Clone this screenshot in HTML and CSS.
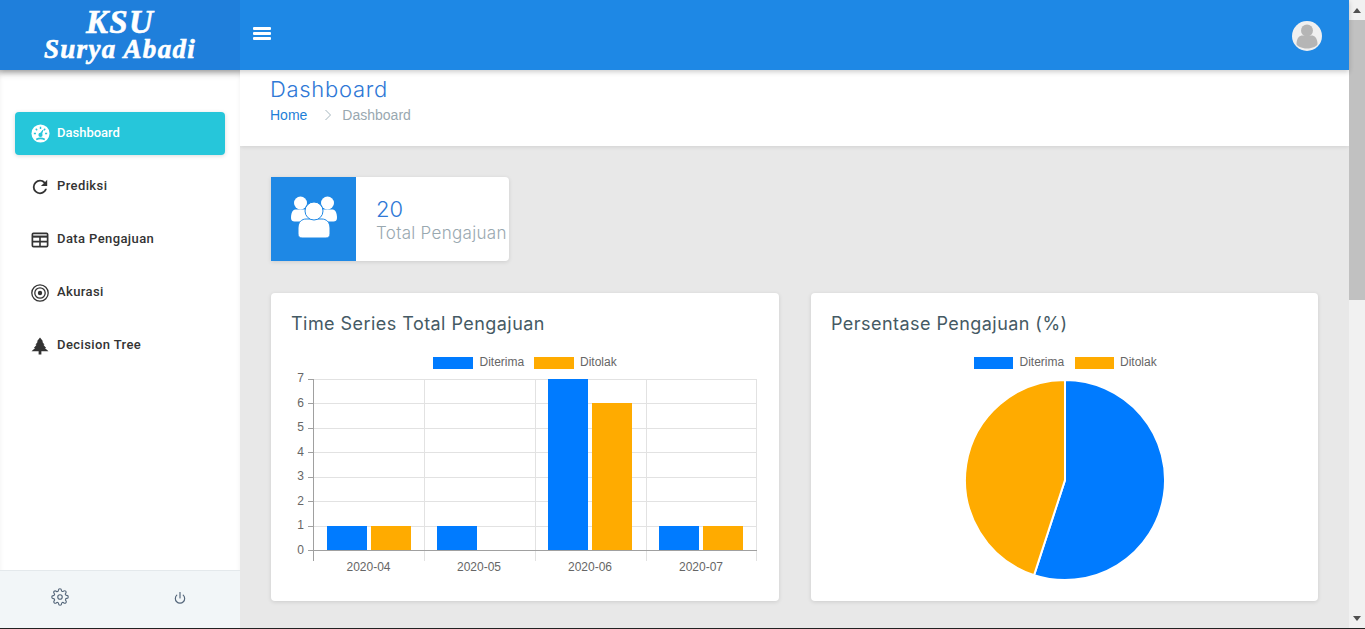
FILE: index.html
```html
<!DOCTYPE html>
<html>
<head>
	<meta charset="utf-8">
	<title>Dashboard</title>
	<link rel="stylesheet" href="styles.css">
</head>
<body>
<div class="window">
	<div class="shell">
		<header class="topbar">
			<div class="logo">KSU<br>Surya Abadi</div>
			<div class="topbar-right">
				<div class="burger"><span></span><span></span><span></span></div>
				<svg class="avatar" viewBox="0 0 30 30">
					<circle cx="15" cy="15" r="15" fill="#f0f0f0"/>
					<circle cx="15" cy="9.500" r="6" fill="#b5b5b5"/>
					<path d="M4.500 23c0-6 3-8.500 6-8.500h9c3 0 6 2.500 6 8.500 0 2-5 4.500-10.500 4.500S4.500 25 4.500 23z" fill="#b5b5b5"/>
				</svg>
			</div>
		</header>

		<div class="content">
			<aside class="sidebar">
				<nav class="menu">
					<a class="menu-item active">
						<svg class="menu-icon big" viewBox="0 0 20 20">
							<circle cx="10" cy="10" r="9.500" fill="#fff"/>
							<path d="M10 3v2.200M5 5l1.500 1.500M15 5l-1.500 1.500M3 10h2.200M17 10h-2.200" stroke="#26c6da" stroke-width="1.500"/>
							<path d="M9.500 10.500 12.500 6.500 10.800 11.500Z" fill="#26c6da" stroke="#26c6da"/>
							<circle cx="10" cy="11.500" r="2.200" fill="#26c6da"/>
							<path d="M5.500 16.200c2.500-1.300 6.500-1.300 9 0" fill="none" stroke="#26c6da" stroke-width="1.800"/>
						</svg>
						<span class="menu-label">Dashboard</span>
					</a>
					<a class="menu-item">
						<svg class="menu-icon" viewBox="2 2 20 20">
							<path fill="#333" d="M17.650 6.350C16.200 4.900 14.210 4 12 4A8 8 0 0 0 4 12 8 8 0 0 0 12 20C15.730 20 18.840 17.450 19.730 14H17.650C16.830 16.330 14.610 18 12 18A6 6 0 0 1 6 12 6 6 0 0 1 12 6C13.660 6 15.140 6.690 16.220 7.780L13 11H20V4L17.650 6.350Z"/>
						</svg>
						<span class="menu-label">Prediksi</span>
					</a>
					<a class="menu-item">
						<svg class="menu-icon" viewBox="-.5 -1.500 17 17">
							<rect x="0.800" y="0.800" width="14.400" height="12.400" rx="1" fill="none" stroke="#333" stroke-width="1.600"/>
							<path d="M1 3.800h14" stroke="#333" stroke-width="2"/>
							<path d="M1 8.500h14M8 4v9" stroke="#333" stroke-width="1.500"/>
						</svg>
						<span class="menu-label">Data Pengajuan</span>
					</a>
					<a class="menu-item">
						<svg class="menu-icon" viewBox="0 0 18 18">
							<circle cx="9" cy="9" r="8.200" fill="none" stroke="#333" stroke-width="1.300"/>
							<circle cx="9" cy="9" r="5.200" fill="none" stroke="#333" stroke-width="1.300"/>
							<circle cx="9" cy="9" r="2.200" fill="#333"/>
						</svg>
						<span class="menu-label">Akurasi</span>
					</a>
					<a class="menu-item">
						<svg class="menu-icon" viewBox="-.5 -.5 17 17">
							<path fill="#333" d="M8 0 11 3.800H10L12.300 6.800H11.200L13.800 9.800H12.600L16 13H9.300V16H6.700V13H0L3.400 9.800H2.200L4.800 6.800H3.700L6 3.800H5Z"/>
						</svg>
						<span class="menu-label">Decision Tree</span>
					</a>
				</nav>
				<div class="side-foot">
					<svg class="foot-icon" viewBox="0 0 24 24" fill="none" stroke="#54667a" stroke-width="1.500" stroke-linejoin="round">
						<circle cx="12" cy="12" r="3"/>
						<path d="M19.400 15a1.650 1.650 0 0 0 .33 1.820l.06.06a2 2 0 1 1-2.830 2.830l-.06-.06a1.650 1.650 0 0 0-2.800 1.150V21a2 2 0 1 1-4 0v-.09a1.650 1.650 0 0 0-2.900-1.150l-.06.06a2 2 0 1 1-2.830-2.830l.06-.06a1.650 1.650 0 0 0-1.150-2.800H3a2 2 0 1 1 0-4h.09a1.650 1.650 0 0 0 1.150-2.900l-.06-.06a2 2 0 1 1 2.830-2.830l.06.06a1.650 1.650 0 0 0 2.800-1.150V3a2 2 0 1 1 4 0v.09a1.650 1.650 0 0 0 2.800 1.150l.06-.06a2 2 0 1 1 2.830 2.830l-.06.06a1.650 1.650 0 0 0 1.150 2.800H21a2 2 0 1 1 0 4h-.09a1.650 1.650 0 0 0-1.510 1.130z"/>
					</svg>
					<svg class="foot-icon power" viewBox="0 0 24 24" fill="none" stroke="#54667a" stroke-width="2" stroke-linecap="round">
						<path d="M6.500 7a8 8 0 1 0 11 0"/>
						<path d="M12 2.500v9.500"/>
					</svg>
				</div>
			</aside>

			<main class="main">
				<div class="page-head">
					<h1 class="page-title">Dashboard</h1>
					<div class="crumbs">
						<a class="crumb-link">Home</a>
						<svg class="crumb-sep" viewBox="0 0 8 12"><path d="M1.500 1l5 5-5 5" fill="none" stroke="#a6b7bf" stroke-width="1"/></svg>
						<span class="crumb-now">Dashboard</span>
					</div>
				</div>

				<div class="page-body">
					<div class="stat-card">
						<div class="stat-icon">
							<svg viewBox="0 0 46 42" width="46" height="42">
								<circle cx="9.500" cy="7" r="6.500" fill="#fff"/>
								<circle cx="36.500" cy="7" r="6.500" fill="#fff"/>
								<path d="M0 22c0-6 2-8.500 5-8.500h36c3 0 5 2.500 5 8.500 0 2.500-1.500 3.500-3.500 3.500h-39C1.500 25.500 0 24.500 0 22z" fill="#fff"/>
								<path d="M7 32c0-6 4-9 8-9h16c4 0 8 3 8 9v6c0 2.500-1.500 4-4 4H11c-2.500 0-4-1.500-4-4z" fill="#fff" stroke="#1e88e5" stroke-width="1"/>
								<circle cx="23" cy="15" r="9" fill="#fff" stroke="#1e88e5" stroke-width="1"/>
							</svg>
						</div>
						<div class="stat-text">
							<div class="stat-num">20</div>
							<div class="stat-label">Total Pengajuan</div>
						</div>
					</div>

					<div class="chart-row">
						<section class="card">
							<h2 class="card-title">Time Series Total Pengajuan</h2>
							<svg class="chart" viewBox="0 0 508 244" width="508" height="244">
								<g class="grid">
									<path d="M42 86.500h444M42 110.500h444M42 135.500h444M42 159.500h444M42 184.500h444M42 208.500h444M42 233.500h444"/>
									<path d="M153.500 86v182M264.500 86v182M375.500 86v182M485.500 86v182"/>
								</g>
								<g class="axis">
									<path d="M42.500 86v182M37 257.500h449"/>
								</g>
								<g class="ticks">
									<path d="M37 86.500h5M37 110.500h5M37 135.500h5M37 159.500h5M37 184.500h5M37 208.500h5M37 233.500h5"/>
								</g>
								<rect class="blue" x="162" y="64" width="40" height="12"/>
								<text x="208.500" y="73">Diterima</text>
								<rect class="orange" x="263" y="64" width="40" height="12"/>
								<text x="309" y="73">Ditolak</text>

								<rect class="blue" x="56" y="233" width="40" height="24"/>
								<rect class="orange" x="100" y="233" width="40" height="24"/>
								<rect class="blue" x="166" y="233" width="40" height="24"/>
								<rect class="blue" x="277" y="86" width="40" height="171"/>
								<rect class="orange" x="321" y="110" width="40" height="147"/>
								<rect class="blue" x="388" y="233" width="40" height="24"/>
								<rect class="orange" x="432" y="233" width="40" height="24"/>

								<g class="y-labels">
									<text x="33" y="89">7</text>
									<text x="33" y="114">6</text>
									<text x="33" y="138">5</text>
									<text x="33" y="163">4</text>
									<text x="33" y="187">3</text>
									<text x="33" y="212">2</text>
									<text x="33" y="236">1</text>
									<text x="33" y="261">0</text>
								</g>
								<g class="x-labels">
									<text x="97.500" y="278">2020-04</text>
									<text x="208" y="278">2020-05</text>
									<text x="319" y="278">2020-06</text>
									<text x="430" y="278">2020-07</text>
								</g>
							</svg>
						</section>

						<section class="card">
							<h2 class="card-title">Persentase Pengajuan (%)</h2>
							<svg class="chart" viewBox="0 0 508 244" width="508" height="244">
								<rect class="blue" x="163" y="64" width="39" height="12"/>
								<text x="208.500" y="73">Diterima</text>
								<rect class="orange" x="264" y="64" width="39" height="12"/>
								<text x="309" y="73">Ditolak</text>
								<path class="blue slice" d="M254 87A100 100 0 1 1 223.100 282.100L254 187Z"/>
								<path class="orange slice" d="M223.100 282.100A100 100 0 0 1 254 87V187Z"/>
							</svg>
						</section>
					</div>
				</div>
			</main>
		</div>
	</div>

	<div class="scrollbar">
		<div class="scroll-btn"><span class="arrow-up"></span></div>
		<div class="scroll-thumb"></div>
		<div class="scroll-rest"></div>
		<div class="scroll-btn"><span class="arrow-down"></span></div>
	</div>
</div>
<div class="screen-edge"></div>
</body>
</html>
```

FILE: styles.css
```css
html, body {
	margin: 0;
	height: 100%;
	overflow: hidden;
}

body {
	font-family: "Liberation Sans", Arial, sans-serif;
	background-color: #e8e8e8;
}

.window {
	display: flex;
	height: 628px;
	overflow: hidden;
}

.shell {
	width: 1349px;
	display: flex;
	flex-direction: column;
}

.screen-edge {
	height: 1px;
	background-color: #222;
}

/* barra de cima */
.topbar {
	display: flex;
	height: 70px;
	flex: none;
	position: relative;
	z-index: 2;
	background-color: #1e88e5;
	box-shadow: 0 2px 5px rgba(0, 0, 0, .2);
}

.logo {
	width: 240px;
	flex: none;
	padding-top: 9px;
	box-sizing: border-box;
	background-color: #1f7fdb;
	color: #fff;
	text-align: center;
	font-family: "Liberation Serif", serif;
	font-style: italic;
	font-weight: bold;
	font-size: 27px;
	line-height: 27px;
	letter-spacing: 1.300px;
	-webkit-text-stroke: .6px #fff;
}

.logo::first-line {
	font-size: 33px;
}

.topbar-right {
	flex: 1;
	display: flex;
	align-items: center;
	justify-content: space-between;
	padding: 0 27px 0 13px;
}

.burger {
	width: 18px;
	display: flex;
	flex-direction: column;
	gap: 2px;
	margin-bottom: 4px;
}

.burger span {
	height: 3px;
	background-color: #fff;
	border-radius: 1px;
}

.avatar {
	width: 30px;
	height: 30px;
	margin-top: 2px;
}

.content {
	flex: 1;
	display: flex;
	min-height: 0;
}

/* menu lateral */
.sidebar {
	width: 240px;
	flex: none;
	display: flex;
	flex-direction: column;
	background-color: #fff;
	position: relative;
	z-index: 1;
	box-shadow: inset 0 7px 7px -4px rgba(0, 0, 0, .25);
}

.menu {
	flex: 1;
	padding: 42px 15px 0;
	display: flex;
	flex-direction: column;
	gap: 10px;
}

.menu-item {
	height: 43px;
	display: flex;
	align-items: center;
	gap: 8px;
	padding-left: 16px;
	font-family: Roboto, sans-serif;
	font-size: 13px;
	font-weight: 500;
	letter-spacing: .4px;
	color: #333;
	border-radius: 4px;
}

.menu-label {
	margin-top: -2px;
}

.menu-item.active {
	background-color: #26c6da;
	color: #fff;
	letter-spacing: 0;
	box-shadow: 0 1px 4px rgba(0, 0, 0, .15);
}

.menu-icon {
	width: 18px;
	height: 18px;
	flex: none;
}

.menu-icon.big {
	width: 19px;
	height: 19px;
	margin-right: -1px;
}

.side-foot {
	height: 57px;
	flex: none;
	display: flex;
	background-color: #f2f6f8;
	border-top: 1px solid #e4e9ec;
}

.foot-icon {
	width: 18px;
	height: 18px;
	margin: 17px 0 0 51px;
}

.foot-icon.power {
	width: 14px;
	height: 14px;
	margin: 20px 0 0 104px;
}

/* conteudo */
.main {
	flex: 1;
	min-width: 0;
	background-color: #e8e8e8;
}

.page-head {
	height: 76px;
	box-sizing: border-box;
	padding: 6px 30px 0;
	background-color: #fff;
	box-shadow: 0 1px 4px rgba(0, 0, 0, .1);
}

.page-title {
	margin: 0;
	font-family: Inter, sans-serif;
	font-size: 22px;
	line-height: 26px;
	font-weight: 300;
	letter-spacing: .7px;
	color: #2f78d6;
}

.crumbs {
	display: flex;
	align-items: center;
	margin-top: 5px;
	font-size: 14px;
}

.crumb-link {
	color: #1e7fd8;
}

.crumb-sep {
	width: 8px;
	height: 12px;
	margin: 0 10px 0 17px;
}

.crumb-now {
	color: #99a8b0;
}

.page-body {
	padding: 31px 30px 0;
}

.stat-card {
	width: 238px;
	height: 84px;
	margin-left: 1px;
	display: flex;
	background-color: #fff;
	border-radius: 0 4px 4px 0;
	box-shadow: 0 1px 4px rgba(0, 0, 0, .12);
}

.stat-icon {
	width: 85px;
	flex: none;
	display: flex;
	align-items: center;
	justify-content: center;
	padding-bottom: 4px;
	box-sizing: border-box;
	background-color: #1e88e5;
}

.stat-text {
	padding: 20px 0 0 20px;
	font-family: Inter, sans-serif;
	font-weight: 300;
	white-space: nowrap;
}

.stat-num {
	font-size: 22px;
	line-height: 24px;
	color: #2f78d6;
}

.stat-label {
	font-size: 17px;
	line-height: 24px;
	letter-spacing: .3px;
	color: #99a8b0;
}

.chart-row {
	display: grid;
	grid-template-columns: 508px 507px;
	gap: 32px;
	margin: 32px 0 0 1px;
}

.card {
	height: 308px;
	background-color: #fff;
	border-radius: 4px;
	box-shadow: 0 1px 4px rgba(0, 0, 0, .12);
	overflow: hidden;
}

.card-title {
	margin: 0;
	height: 64px;
	padding: 18px 20px 0;
	box-sizing: border-box;
	font-family: Inter, sans-serif;
	font-size: 18px;
	line-height: 26px;
	font-weight: 400;
	letter-spacing: .45px;
	color: #455a64;
}

.chart {
	display: block;
	overflow: visible;
	margin-top: -64px;
	font-size: 12px;
	fill: #666;
}

.grid path {
	stroke: #e2e2e2;
	fill: none;
}

.axis path, .ticks path {
	stroke: #a0a0a0;
	fill: none;
}

.blue {
	fill: #007bff;
}

.orange {
	fill: #ffab00;
}

.slice {
	stroke: #fff;
	stroke-width: 2;
}

.y-labels text {
	text-anchor: end;
}

.x-labels text {
	text-anchor: middle;
}

/* barra de rolagem */
.scrollbar {
	width: 16px;
	flex: none;
	display: flex;
	flex-direction: column;
	background-color: #f1f1f1;
}

.scroll-btn {
	height: 20px;
	display: flex;
	align-items: center;
	justify-content: center;
}

.arrow-up {
	border: 4px solid transparent;
	border-top: 0;
	border-bottom: 5px solid #505050;
}

.arrow-down {
	border: 4px solid transparent;
	border-bottom: 0;
	border-top: 5px solid #505050;
}

.scroll-thumb {
	height: 280px;
	background-color: #c1c1c1;
}

.scroll-rest {
	flex: 1;
}
```
